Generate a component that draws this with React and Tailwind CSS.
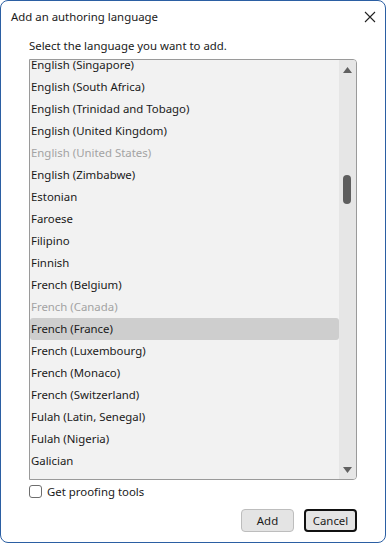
const items = [
  ["English (Singapore)"],
  ["English (South Africa)"],
  ["English (Trinidad and Tobago)"],
  ["English (United Kingdom)"],
  ["English (United States)", "disabled"],
  ["English (Zimbabwe)"],
  ["Estonian"],
  ["Faroese"],
  ["Filipino"],
  ["Finnish"],
  ["French (Belgium)"],
  ["French (Canada)", "disabled"],
  ["French (France)", "selected"],
  ["French (Luxembourg)"],
  ["French (Monaco)"],
  ["French (Switzerland)"],
  ["Fulah (Latin, Senegal)"],
  ["Fulah (Nigeria)"],
  ["Galician"],
];

export default function App() {
  return (
    <div className="h-[543px] w-[386px] overflow-hidden rounded-[8px] border border-[#2b5fa3] bg-white font-['Noto_Sans',sans-serif] text-[11.4px] text-[#1a1a1a]">
      <div className="flex h-[32px] items-center justify-between pl-[10px] pr-[9px]">
        <span>Add an authoring language</span>
        <svg width="12" height="12" viewBox="0 0 12 12" className="text-[#222]">
          <path d="M1 1 L11 11 M11 1 L1 11" stroke="currentColor" strokeWidth="1.1" />
        </svg>
      </div>
      <div className="px-[28px]">
        <div className="mt-[3px] h-[20px] leading-[20px]">Select the language you want to add.</div>
        <div className="mt-[3px] flex h-[421px] w-[328px] overflow-hidden rounded-r-[4px] border border-[#9a9a9a] bg-[#f2f2f2]">
          <div className="-mt-[6px] flex-1">
            {items.map(([name, state]) => (
              <div
                key={name}
                className={
                  "h-[22px] rounded-[3px] pl-[1px] leading-[22px] " +
                  (state === "selected" ? "bg-[#cecece] " : "") +
                  (state === "disabled" ? "text-[#a3a3a3]" : "")
                }
              >
                {name}
              </div>
            ))}
          </div>
          <div className="relative w-[17px] bg-[#e6e6e6]">
            <svg width="9" height="6" viewBox="0 0 9 6" className="absolute left-[4px] top-[7px]">
              <path d="M4.5 0 L9 6 L0 6 Z" fill="#606060" />
            </svg>
            <div className="absolute left-[4px] top-[115px] h-[29px] w-[8px] rounded-[4px] bg-[#5e5e5e]" />
            <svg width="9" height="6" viewBox="0 0 9 6" className="absolute bottom-[6px] left-[4px]">
              <path d="M0 0 L9 0 L4.5 6 Z" fill="#606060" />
            </svg>
          </div>
        </div>
        <div className="mt-[3px] flex items-center gap-[5px]">
          <div className="h-[13px] w-[13px] rounded-[3px] border border-[#6e6e6e] bg-white" />
          <span>Get proofing tools</span>
        </div>
        <div className="mt-[9px] flex justify-end gap-[10px]">
          <button className="h-[23px] w-[53px] rounded-[4px] border border-[#bdbdbd] bg-[#e4e4e4]">Add</button>
          <button className="h-[23px] w-[53px] rounded-[4px] border-2 border-[#111] bg-[#e4e4e4]">Cancel</button>
        </div>
      </div>
    </div>
  );
}
